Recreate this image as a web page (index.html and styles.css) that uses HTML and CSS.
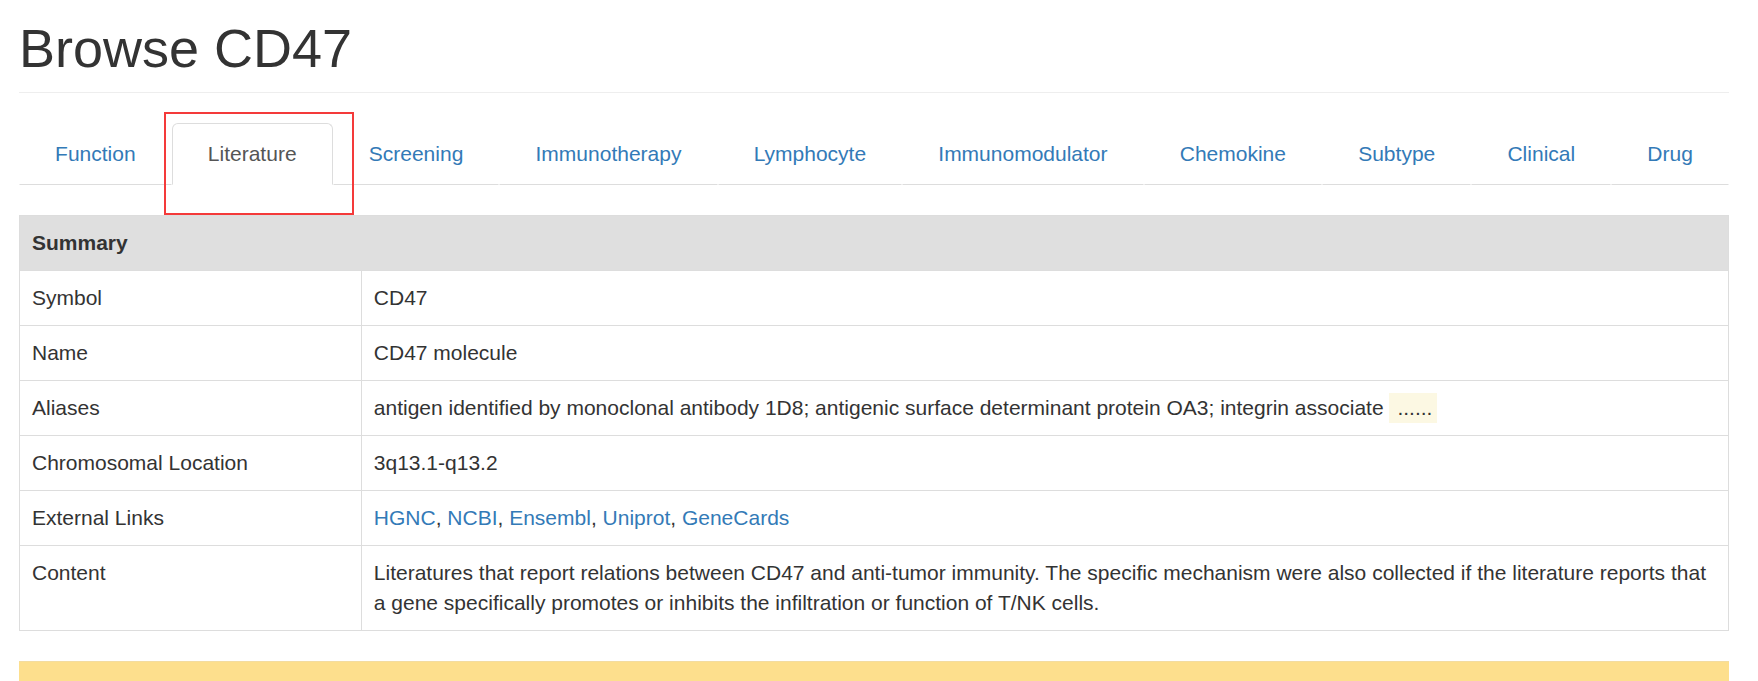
FILE: index.html
```html
<!DOCTYPE html>
<html lang="en">
<head>
<meta charset="utf-8">
<title>Browse CD47</title>
<link rel="stylesheet" href="styles.css">
</head>
<body>
<div class="container">
  <div class="page-header">
    <h1>Browse CD47</h1>
  </div>
  <ul class="nav-tabs">
    <li><a href="#">Function</a></li>
    <li class="active"><a href="#">Literature</a></li>
    <li><a href="#">Screening</a></li>
    <li><a href="#">Immunotherapy</a></li>
    <li><a href="#">Lymphocyte</a></li>
    <li><a href="#">Immunomodulator</a></li>
    <li><a href="#">Chemokine</a></li>
    <li><a href="#">Subtype</a></li>
    <li><a href="#">Clinical</a></li>
    <li><a href="#">Drug</a></li>
  </ul>
  <div class="tab-content">
    <table class="summary">
      <colgroup><col class="col-key"><col></colgroup>
      <thead>
        <tr><th colspan="2">Summary</th></tr>
      </thead>
      <tbody>
        <tr><td>Symbol</td><td>CD47</td></tr>
        <tr><td>Name</td><td>CD47 molecule</td></tr>
        <tr><td>Aliases</td><td>antigen identified by monoclonal antibody 1D8; antigenic surface determinant protein OA3; integrin associate <span class="more">......</span></td></tr>
        <tr><td>Chromosomal Location</td><td>3q13.1-q13.2</td></tr>
        <tr><td>External Links</td><td><a href="#">HGNC</a>, <a href="#">NCBI</a>, <a href="#">Ensembl</a>, <a href="#">Uniprot</a>, <a href="#">GeneCards</a></td></tr>
        <tr><td>Content</td><td>Literatures that report relations between CD47 and anti-tumor immunity. The specific mechanism were also collected if the literature reports that a gene specifically promotes or inhibits the infiltration or function of T/NK cells.</td></tr>
      </tbody>
    </table>
    <div class="warning-bar"></div>
  </div>
</div>
<div class="annotation"></div>
</body>
</html>
```

FILE: styles.css
```css
html, body {
  margin: 0;
  padding: 0;
  background: #fff;
}

body {
  font-family: "Liberation Sans", Arial, Helvetica, sans-serif;
  font-size: 21px;
  line-height: 30px;
  color: #333;
  overflow: hidden;
}

a {
  color: #337ab7;
  text-decoration: none;
}

.container {
  margin-left: 19px;
  width: 1710px;
}

.page-header {
  padding-bottom: 13.5px;
  border-bottom: 1px solid #eee;
  margin-bottom: 30px;
  padding-top: 18.6px;
}

.page-header h1 {
  margin: 0;
  font-size: 54px;
  font-weight: 400;
  line-height: 59.4px;
  color: #333;
}

.nav-tabs {
  display: flex;
  list-style: none;
  margin: 0;
  padding: 0;
}

.nav-tabs li {
  flex: 1 1 auto;
}

.nav-tabs li a {
  display: block;
  text-align: center;
  padding: 15px 22.5px;
  line-height: 30px;
  border: 1px solid transparent;
  border-bottom: 1px solid #ddd;
  border-radius: 6px 6px 0 0;
  color: #337ab7;
}

.nav-tabs li.active a {
  color: #555;
  border-color: #ddd;
  border-bottom-color: #fff;
}

.tab-content {
  padding-top: 30px;
}

.summary {
  width: 100%;
  border-collapse: collapse;
  border: 1px solid #ddd;
  margin-bottom: 30px;
}

.summary .col-key {
  width: 20%;
}

.summary th,
.summary td {
  padding: 12px;
  line-height: 30px;
  border: 1px solid #ddd;
  text-align: left;
  vertical-align: top;
}

.summary th {
  background: #dfdfdf;
  font-weight: 700;
}

.more {
  display: inline-block;
  background: #fcf8e3;
  line-height: 30px;
  padding: 0 5px 0 8px;
  vertical-align: top;
}

.warning-bar {
  height: 60px;
  background: #fddf8d;
  border-top: 1px solid #f3dca0;
}

.annotation {
  position: absolute;
  left: 164px;
  top: 112px;
  width: 186px;
  height: 99px;
  border: 2px solid #f43a3a;
  pointer-events: none;
}
```
